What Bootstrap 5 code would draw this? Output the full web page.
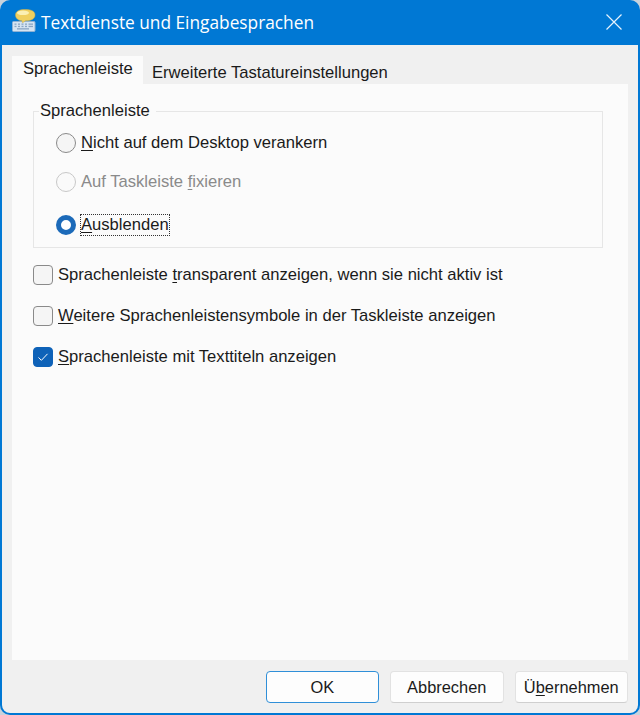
<!DOCTYPE html>
<html lang="de">
<head>
  <meta charset="UTF-8">
  <title>Textdienste und Eingabesprachen</title>
  <link href="https://cdn.jsdelivr.net/npm/bootstrap@5.3.3/dist/css/bootstrap.min.css" rel="stylesheet">
  <style>
    html, body { height: 100%; }
    body { background: #c9d3dc; font-family: "Liberation Sans", Arial, sans-serif; font-size: 16.6px; color: #1a1a1a; overflow: hidden; }
    .fenster { width: 640px; height: 715px; background: #0078d4; border-radius: 10px; padding: 0 2px 2px; }
    .titelzeile { height: 45px; color: #fff; padding: 0 16px 2px 10px; }
    .titeltext { font-family: "Open Sans", sans-serif; font-size: 17.3px; margin-left: 4px; padding-top: 2px; }
    .inhalt { height: 668px; background: #f0f0f0; border-radius: 0 0 8px 8px; padding: 11px 10px 0; }
    .reiter { border: 0; height: 28px; }
    .reiter .nav-link { border: 0; border-radius: 0; color: #1a1a1a; padding: 0 10px 0 11px; font-size: 16.6px; line-height: 26px; height: 28px; }
    .reiter .nav-link.active { background: #fbfbfb; color: #1a1a1a; width: 131px; }
    .reiter .nav-link.hinten { padding: 4px 11px 0 9px; background: #f0f0f0; }
    .tafel { height: 576px; background: #fbfbfb; padding: 18px 25px 0 21px; }
    .gruppe { border: 1px solid #e6e6e6; height: 146px; padding: 0; margin: 0; }
    .gruppe legend { float: none; width: auto; font-size: 16.6px; line-height: 18px; height: 18px; margin: 0 0 0 5px; padding: 0 6px 0 1px; }
    .gruppe .wahl { margin-left: 22px; gap: 5px; }
    .wahl { display: flex; align-items: center; gap: 5px; margin: 0; padding: 0; min-height: 0; line-height: 20px; }
    .wahl .form-check-input { width: 20px; height: 20px; margin: 0; flex: none; float: none; background-color: #f5f5f5; border: 1px solid #8a8a8a; }
    .wahl .form-check-input:focus { box-shadow: none; }
    .wahl .form-check-input:disabled { opacity: 1; background-color: #fafafa; border-color: #c8c8c8; }
    .wahl .form-check-input[type=radio]:checked { background-color: #fff; border: 5px solid #1c6ab9; background-image: none; }
    .wahl .form-check-input[type=checkbox] { border-radius: 4px; }
    .wahl .form-check-input[type=checkbox]:checked { background-color: #0e62b8; border-color: #0e62b8; background-image: url("data:image/svg+xml,%3csvg xmlns='http://www.w3.org/2000/svg' viewBox='0 0 20 20'%3e%3cpath d='M5 10.500l3.200 3.200L15 6.500' fill='none' stroke='%23fff' stroke-width='1.100'/%3e%3c/svg%3e"); }
    .wahl .form-check-label { opacity: 1 !important; }
    .grau { color: #8a8a8a; }
    .punktrahmen { outline: 1px dotted #333; padding: 0; line-height: 20px; }
    .radio1 { margin-top: 13px; }
    .radio2 { margin-top: 19px; }
    .radio3 { margin-top: 23px; }
    .pruef { margin-top: 21px; }
    .pruef1 { margin-top: 17px; }
    .fuss { gap: 11px; padding-top: 11px; }
    .knopf { width: 113.5px; height: 32px; padding: 0; font-size: 16.4px; color: #1a1a1a; background: #fdfdfd; border: 1px solid #e2e2e2; border-bottom-color: #cfcfcf; border-radius: 4px; }
    .knopf.haupt { border: 1px solid #2f8fd8; }
    .knopf:hover { color: #1a1a1a; }
    u { text-underline-offset: 2px; text-decoration-thickness: 1px; }
  </style>
</head>
<body>
  <div class="fenster d-flex flex-column">
    <div class="titelzeile d-flex align-items-center flex-shrink-0">
      <svg width="25" height="25" viewBox="0 0 25 25" class="flex-shrink-0">
        <rect x="0.5" y="12.5" width="22.500" height="10" rx="1" fill="#d5e4f2" stroke="#8fb2d4"/>
        <g fill="#8aa6c4">
          <rect x="2.5" y="14.500" width="2" height="1.300"/><rect x="6" y="14.500" width="2" height="1.300"/><rect x="9.500" y="14.500" width="2" height="1.300"/><rect x="13" y="14.500" width="2" height="1.300"/><rect x="16.500" y="14.500" width="4.500" height="1.300"/>
          <rect x="2.500" y="16.800" width="2" height="1.300"/><rect x="6" y="16.800" width="2" height="1.300"/><rect x="9.500" y="16.800" width="2" height="1.300"/><rect x="13" y="16.800" width="2" height="1.300"/><rect x="16.500" y="16.800" width="4.500" height="1.300"/>
          <rect x="5" y="19.200" width="12" height="1.300"/>
        </g>
        <path d="M13 .5C7 .5 3.500 2.500 3.500 6s3 5.500 6.500 5.800l.5 2 3-2C19 11.800 23 10 23 6S19 .5 13 .5z" fill="#f0d060" stroke="#d0ae48" stroke-width=".5"/>
        <ellipse cx="11" cy="3.800" rx="6" ry="2.300" fill="#fbf0b4"/>
      </svg>
      <span class="titeltext">Textdienste und Eingabesprachen</span>
      <svg width="16" height="16" viewBox="0 0 16 16" class="ms-auto flex-shrink-0">
        <path d="M.5.5l15 15M15.500.5l-15 15" stroke="#e6f2fc" stroke-width="1.200" fill="none"/>
      </svg>
    </div>
    <div class="inhalt">
      <ul class="nav nav-tabs reiter">
        <li class="nav-item"><a class="nav-link active" href="#">Sprachenleiste</a></li>
        <li class="nav-item"><a class="nav-link hinten" href="#">Erweiterte Tastatureinstellungen</a></li>
      </ul>
      <div class="tafel">
        <fieldset class="gruppe">
          <legend>Sprachenleiste</legend>
          <div class="form-check wahl radio1">
            <input class="form-check-input" type="radio" name="leiste" id="r1">
            <label class="form-check-label" for="r1"><u>N</u>icht auf dem Desktop verankern</label>
          </div>
          <div class="form-check wahl radio2">
            <input class="form-check-input" type="radio" name="leiste" id="r2" disabled>
            <label class="form-check-label grau" for="r2">Auf Taskleiste <u>f</u>ixieren</label>
          </div>
          <div class="form-check wahl radio3">
            <input class="form-check-input" type="radio" name="leiste" id="r3" checked>
            <label class="form-check-label punktrahmen" for="r3"><u>A</u>usblenden</label>
          </div>
        </fieldset>
        <div class="form-check wahl pruef pruef1">
          <input class="form-check-input" type="checkbox" id="c1">
          <label class="form-check-label" for="c1">Sprachenleiste <u>t</u>ransparent anzeigen, wenn sie nicht aktiv ist</label>
        </div>
        <div class="form-check wahl pruef">
          <input class="form-check-input" type="checkbox" id="c2">
          <label class="form-check-label" for="c2"><u>W</u>eitere Sprachenleistensymbole in der Taskleiste anzeigen</label>
        </div>
        <div class="form-check wahl pruef">
          <input class="form-check-input" type="checkbox" id="c3" checked>
          <label class="form-check-label" for="c3"><u>S</u>prachenleiste mit Texttiteln anzeigen</label>
        </div>
      </div>
      <div class="d-flex justify-content-end fuss">
        <button class="btn knopf haupt">OK</button>
        <button class="btn knopf">Abbrechen</button>
        <button class="btn knopf">Ü<u>b</u>ernehmen</button>
      </div>
    </div>
  </div>
  <script src="https://cdn.jsdelivr.net/npm/bootstrap@5.3.3/dist/js/bootstrap.bundle.min.js"></script>
</body>
</html>
